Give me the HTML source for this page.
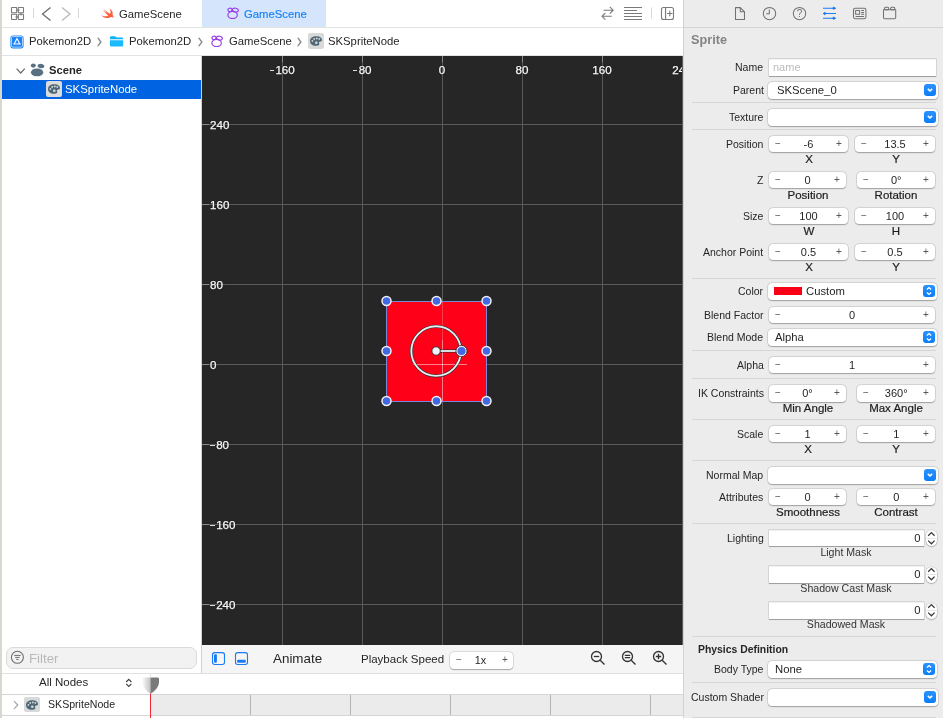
<!DOCTYPE html><html><head><meta charset="utf-8"><style>
*{box-sizing:border-box;margin:0;padding:0}
html,body{width:943px;height:718px;overflow:hidden;background:#fff;font-family:"Liberation Sans",sans-serif;color:#262626}
.a{position:absolute}
.t{position:absolute;white-space:nowrap;line-height:1}
svg{position:absolute;overflow:visible}
.fld{position:absolute;background:#fff;border-radius:4px;box-shadow:0 0 0 0.6px rgba(0,0,0,.14),0 0.8px 1.2px rgba(0,0,0,.28)}
.tf{position:absolute;background:#fff;box-shadow:inset 0 0.5px 0 rgba(0,0,0,.1),0 0 0 0.6px rgba(0,0,0,.16),0 1px 0.6px rgba(0,0,0,.25)}
.lbl{position:absolute;white-space:nowrap;line-height:1;font-size:10.5px;color:#262626;text-align:right}
.sub{position:absolute;white-space:nowrap;line-height:1;font-size:11.5px;color:#1d1d1d;text-align:center;-webkit-text-stroke:0.2px #1d1d1d}
.val{position:absolute;white-space:nowrap;line-height:1;font-size:11px;color:#262626;text-align:center}
.pm{position:absolute;white-space:nowrap;line-height:1;font-size:10px;color:#555}
.sep{position:absolute;left:692px;width:244px;height:1px;background:#d6d6d6}
.t,.lbl,.sub,.val,.pm,svg{will-change:transform}
.blue{position:absolute;width:12px;height:12px;border-radius:3px;background:linear-gradient(#2a92ff,#0a7df7)}
</style></head><body>
<div class="a" style="left:0;top:0;width:2px;height:718px;background:#d9d7d0"></div>
<div class="a" style="left:2px;top:0;width:681px;height:27px;background:#fff"></div>
<div class="a" style="left:2px;top:27px;width:681px;height:1px;background:#e3e3e3"></div>
<div class="a" style="left:202px;top:0;width:124px;height:27px;background:#d5e6fc"></div>
<div class="a" style="left:2px;top:55px;width:681px;height:1px;background:#e3e3e3"></div>
<div class="a" style="left:202px;top:56px;width:480px;height:589px;background:#262626;overflow:hidden" id="cv"></div>
<div class="a" style="left:201px;top:56px;width:1px;height:617px;background:#d0d0d0"></div>
<div class="a" style="left:683px;top:0;width:260px;height:718px;background:#ececec"></div>
<div class="a" style="left:683px;top:0;width:1px;height:718px;background:#d2d2d2"></div>
<div class="a" style="left:682px;top:56px;width:1px;height:589px;background:#5c5c5c"></div>
<div class="a" style="left:684px;top:27px;width:259px;height:1px;background:#d4d4d4"></div>
<svg style="left:0;top:0" width="943" height="28" viewBox="0 0 943 28">
<g fill="none" stroke="#7a7a7a" stroke-width="1.1">
<rect x="11.5" y="7.5" width="5.2" height="5.2" rx="0.4"/><rect x="18.3" y="7.5" width="5.2" height="5.2" rx="0.4"/>
<rect x="11.5" y="14.3" width="5.2" height="5.2" rx="0.4"/><rect x="18.3" y="14.3" width="5.2" height="5.2" rx="0.4"/>
<path d="M16.7 10.1 H19.5 M21 12.7 V15.5 M18.3 16.9 H15.5"/>
</g>
<rect x="33" y="8" width="1" height="10" fill="#d8d8d8"/>
<path d="M50.5 7.5 L42.5 14 L50.5 20.5" fill="none" stroke="#6c6c6c" stroke-width="1.3"/>
<path d="M62 7.5 L70 14 L62 20.5" fill="none" stroke="#b8b8b8" stroke-width="1.3"/>
<rect x="78" y="8" width="1" height="10" fill="#d8d8d8"/>
<g fill="none" stroke="#7a7a7a" stroke-width="1.1">
<path d="M603.5 10.2 H613.2 M609.8 6.8 L613.2 10.2 L609.8 13.6"/>
<path d="M611.8 16.3 H602 M605.4 12.9 L602 16.3 L605.4 19.7"/>
</g>
<g fill="#7a7a7a">
<rect x="624" y="7" width="18" height="1"/><rect x="624" y="10" width="13" height="1"/><rect x="624" y="13" width="18" height="1"/>
<rect x="624" y="16" width="18" height="1"/><rect x="624" y="19" width="18" height="1"/>
</g>
<rect x="651" y="7.5" width="1" height="11" fill="#d8d8d8"/>
<g fill="none" stroke="#7a7a7a" stroke-width="1.1">
<rect x="661.5" y="7.5" width="12" height="12" rx="2"/><path d="M665.6 7.5 V19.5 M669.8 10.8 V16.2 M667.1 13.5 H672.5"/>
</g>
</svg>
<svg style="left:100.4px;top:8.3px" width="15" height="11" viewBox="0 0 15 11">
<path d="M9.5 0.3 C12 2 13.2 4.3 12.6 6.8 C13.5 8 13.7 9.2 13.4 10 C12.9 9.2 11.9 8.9 11.1 9.1 C8.6 10.6 4.5 10.6 1 7.2 C3.5 8.6 6.3 8.7 8.2 7.4 C5.9 5.8 3.8 3.4 2.6 1.8 C4.2 3.3 6.3 4.8 7.5 5.6 C5.6 3.8 4.5 2.3 3.7 1 C6 3.2 8.4 4.9 10.1 6 C10.9 4.3 10.7 2.3 9.5 0.3 Z" fill="#fc5f3e"/>
</svg>
<div class="t" style="left:119px;top:8.8px;font-size:11.3px;color:#262626">GameScene</div>
<svg style="left:226.5px;top:7.4px" width="13" height="13" viewBox="0 0 13 13">
<g fill="none" stroke="#9b3fe6" stroke-width="1.15">
<ellipse cx="5.6" cy="7.9" rx="4.7" ry="3.6"/>
<ellipse cx="3" cy="2.9" rx="2.1" ry="1.7" transform="rotate(-15 3 2.9)"/>
<ellipse cx="8.4" cy="3.1" rx="3" ry="1.9" transform="rotate(12 8.4 3.1)"/>
</g></svg>
<div class="t" style="left:243.5px;top:8.8px;font-size:11.3px;color:#1a84f6;-webkit-text-stroke:0.2px #1a84f6">GameScene</div>
<svg style="left:10px;top:34.6px" width="14" height="14" viewBox="0 0 14 14">
<rect x="0.4" y="0.4" width="13.2" height="13" rx="2.6" fill="#1b83f7"/>
<rect x="1.5" y="1.5" width="11" height="10.6" rx="1.3" fill="none" stroke="#d6e8ff" stroke-width="0.75"/>
<g stroke="#fff" stroke-width="1.1" fill="none" stroke-linecap="round"><path d="M7 3.4 L4.3 8.8 M7 3.4 L9.7 8.8 M3.6 9 H10.4"/></g>
</svg>
<div class="t" style="left:29.3px;top:36.2px;font-size:11.3px">Pokemon2D</div>
<svg style="left:97.3px;top:36.5px" width="5" height="10" viewBox="0 0 5 10"><path d="M1 1.2 L3.9 5 L1 8.8" fill="none" stroke="#8c8c8c" stroke-width="1.4" stroke-linecap="round" stroke-linejoin="round"/></svg>
<svg style="left:110px;top:35.6px" width="14" height="11" viewBox="0 0 14 11">
<path d="M0 1.4 Q0 0.2 1.2 0.2 H4.6 Q5.4 0.2 6 0.9 L6.6 1.5 H12 Q13.2 1.5 13.2 2.7 V3.3 H0 Z" fill="#0ab2fa"/>
<path d="M0 4.3 H13.2 V9.2 Q13.2 10.4 12 10.4 H1.2 Q0 10.4 0 9.2 Z" fill="#1bbafc"/>
</svg>
<div class="t" style="left:129.4px;top:36.2px;font-size:11.3px">Pokemon2D</div>
<svg style="left:197.5px;top:36.5px" width="5" height="10" viewBox="0 0 5 10"><path d="M1 1.2 L3.9 5 L1 8.8" fill="none" stroke="#8c8c8c" stroke-width="1.4" stroke-linecap="round" stroke-linejoin="round"/></svg>
<svg style="left:211.4px;top:35.4px" width="13" height="13" viewBox="0 0 13 13">
<g fill="none" stroke="#9b3fe6" stroke-width="1.15">
<ellipse cx="5.6" cy="7.9" rx="4.7" ry="3.6"/>
<ellipse cx="3" cy="2.9" rx="2.1" ry="1.7" transform="rotate(-15 3 2.9)"/>
<ellipse cx="8.4" cy="3.1" rx="3" ry="1.9" transform="rotate(12 8.4 3.1)"/>
</g></svg>
<div class="t" style="left:229px;top:36.2px;font-size:11.3px">GameScene</div>
<svg style="left:296.5px;top:36.5px" width="5" height="10" viewBox="0 0 5 10"><path d="M1 1.2 L3.9 5 L1 8.8" fill="none" stroke="#8c8c8c" stroke-width="1.4" stroke-linecap="round" stroke-linejoin="round"/></svg>
<div class="a" style="left:308.2px;top:33.2px;width:15.5px;height:15.5px;background:#d9d9d9;border-radius:2px"></div>
<svg style="left:310.0px;top:36.0px" width="12" height="10" viewBox="0 0 12 10">
<path d="M6.2 0.2 C9.6 0.2 12 1.8 12 4 C12 5.5 10.8 5.6 9.8 5.7 C8.9 5.8 8.7 6.6 9.2 7.4 C9.6 8.3 9 9.6 6.4 9.8 C2.6 10 0 8.2 0 5 C0 2.2 2.6 0.2 6.2 0.2 Z" fill="#4f6878"/>
<g fill="#d9d9d9"><circle cx="4.2" cy="2.9" r="0.95"/><circle cx="6.8" cy="2.4" r="0.95"/><circle cx="9.3" cy="2.9" r="0.9"/><circle cx="2.4" cy="4.9" r="0.9"/><circle cx="6.3" cy="6.8" r="1.3"/></g>
</svg>
<div class="t" style="left:328px;top:36.2px;font-size:11.3px">SKSpriteNode</div>
<svg style="left:16px;top:68px" width="10" height="6" viewBox="0 0 10 6"><path d="M0.6 0.6 L4.7 5 L8.8 0.6" fill="none" stroke="#6a6a6a" stroke-width="1.2"/></svg>
<svg style="left:0;top:0" width="60" height="80" viewBox="0 0 60 80">
<ellipse cx="33.3" cy="65.6" rx="2.5" ry="2.1" fill="#587082"/>
<ellipse cx="41" cy="66.1" rx="3.4" ry="2.2" fill="#587082" transform="rotate(8 41 66.1)"/>
<ellipse cx="37.1" cy="72.4" rx="6.6" ry="4.4" fill="#587082" stroke="#fff" stroke-width="0.9"/>
</svg>
<div class="t" style="left:49.3px;top:64.8px;font-size:11.2px;font-weight:bold;color:#262626">Scene</div>
<div class="a" style="left:2px;top:80px;width:199px;height:19px;background:#0063e1"></div>
<div class="a" style="left:46.3px;top:81.2px;width:15.5px;height:15.5px;background:#dcdcdc;border-radius:2px"></div>
<svg style="left:48.099999999999994px;top:84.0px" width="12" height="10" viewBox="0 0 12 10">
<path d="M6.2 0.2 C9.6 0.2 12 1.8 12 4 C12 5.5 10.8 5.6 9.8 5.7 C8.9 5.8 8.7 6.6 9.2 7.4 C9.6 8.3 9 9.6 6.4 9.8 C2.6 10 0 8.2 0 5 C0 2.2 2.6 0.2 6.2 0.2 Z" fill="#4f6878"/>
<g fill="#dcdcdc"><circle cx="4.2" cy="2.9" r="0.95"/><circle cx="6.8" cy="2.4" r="0.95"/><circle cx="9.3" cy="2.9" r="0.9"/><circle cx="2.4" cy="4.9" r="0.9"/><circle cx="6.3" cy="6.8" r="1.3"/></g>
</svg>
<div class="t" style="left:65px;top:84px;font-size:11.4px;color:#fff">SKSpriteNode</div>
<div class="a" style="left:282px;top:56px;width:1px;height:589px;background:#5a5a5a"></div>
<div class="a" style="left:362px;top:56px;width:1px;height:589px;background:#5a5a5a"></div>
<div class="a" style="left:442px;top:56px;width:1px;height:589px;background:#5a5a5a"></div>
<div class="a" style="left:522px;top:56px;width:1px;height:589px;background:#5a5a5a"></div>
<div class="a" style="left:602px;top:56px;width:1px;height:589px;background:#5a5a5a"></div>
<div class="a" style="left:202px;top:124px;width:480px;height:1px;background:#5a5a5a"></div>
<div class="a" style="left:202px;top:204px;width:480px;height:1px;background:#5a5a5a"></div>
<div class="a" style="left:202px;top:284px;width:480px;height:1px;background:#5a5a5a"></div>
<div class="a" style="left:202px;top:364px;width:480px;height:1px;background:#5a5a5a"></div>
<div class="a" style="left:202px;top:444px;width:480px;height:1px;background:#5a5a5a"></div>
<div class="a" style="left:202px;top:524px;width:480px;height:1px;background:#5a5a5a"></div>
<div class="a" style="left:202px;top:604px;width:480px;height:1px;background:#5a5a5a"></div>
<div class="a" style="left:386px;top:301px;width:101px;height:101px;background:#ff0019;border:1px solid #7d87d8"></div>
<div class="a" style="left:442px;top:302px;width:1px;height:38px;background:rgba(255,255,255,.22)"></div>
<div class="a" style="left:442px;top:340px;width:1px;height:61px;background:rgba(255,255,255,.5)"></div>
<div class="a" style="left:413px;top:364px;width:54px;height:1px;background:rgba(255,255,255,.5)"></div>
<div class="a" style="left:202px;top:56px;width:480px;height:589px;overflow:hidden"><div class="a" style="left:80px;top:0px;width:1px;height:6px;background:#8a8a8a"></div><div class="t" style="left:40px;width:80px;text-align:center;top:8.2px;font-size:11.6px;color:#f8f8f8;-webkit-text-stroke:0.25px #f8f8f8;text-shadow:0 0 1.5px #111"><span style="display:inline-block;width:4.4px;height:1.1px;background:#dcdcdc;vertical-align:2.6px;margin-right:1.4px;margin-left:0.4px"></span>160</div><div class="a" style="left:160px;top:0px;width:1px;height:6px;background:#8a8a8a"></div><div class="t" style="left:120px;width:80px;text-align:center;top:8.2px;font-size:11.6px;color:#f8f8f8;-webkit-text-stroke:0.25px #f8f8f8;text-shadow:0 0 1.5px #111"><span style="display:inline-block;width:4.4px;height:1.1px;background:#dcdcdc;vertical-align:2.6px;margin-right:1.4px;margin-left:0.4px"></span>80</div><div class="a" style="left:240px;top:0px;width:1px;height:6px;background:#8a8a8a"></div><div class="t" style="left:200px;width:80px;text-align:center;top:8.2px;font-size:11.6px;color:#f8f8f8;-webkit-text-stroke:0.25px #f8f8f8;text-shadow:0 0 1.5px #111">0</div><div class="a" style="left:320px;top:0px;width:1px;height:6px;background:#8a8a8a"></div><div class="t" style="left:280px;width:80px;text-align:center;top:8.2px;font-size:11.6px;color:#f8f8f8;-webkit-text-stroke:0.25px #f8f8f8;text-shadow:0 0 1.5px #111">80</div><div class="a" style="left:400px;top:0px;width:1px;height:6px;background:#8a8a8a"></div><div class="t" style="left:360px;width:80px;text-align:center;top:8.2px;font-size:11.6px;color:#f8f8f8;-webkit-text-stroke:0.25px #f8f8f8;text-shadow:0 0 1.5px #111">160</div><div class="a" style="left:480px;top:0px;width:1px;height:6px;background:#8a8a8a"></div><div class="t" style="left:440px;width:80px;text-align:center;top:8.2px;font-size:11.6px;color:#f8f8f8;-webkit-text-stroke:0.25px #f8f8f8;text-shadow:0 0 1.5px #111">240</div><div class="a" style="left:0px;top:68px;width:7px;height:1px;background:#8a8a8a"></div><div class="t" style="left:8px;top:63.2px;font-size:11.6px;color:#f8f8f8;-webkit-text-stroke:0.25px #f8f8f8;text-shadow:0 0 1.5px #111">240</div><div class="a" style="left:0px;top:148px;width:7px;height:1px;background:#8a8a8a"></div><div class="t" style="left:8px;top:143.2px;font-size:11.6px;color:#f8f8f8;-webkit-text-stroke:0.25px #f8f8f8;text-shadow:0 0 1.5px #111">160</div><div class="a" style="left:0px;top:228px;width:7px;height:1px;background:#8a8a8a"></div><div class="t" style="left:8px;top:223.2px;font-size:11.6px;color:#f8f8f8;-webkit-text-stroke:0.25px #f8f8f8;text-shadow:0 0 1.5px #111">80</div><div class="a" style="left:0px;top:308px;width:7px;height:1px;background:#8a8a8a"></div><div class="t" style="left:8px;top:303.2px;font-size:11.6px;color:#f8f8f8;-webkit-text-stroke:0.25px #f8f8f8;text-shadow:0 0 1.5px #111">0</div><div class="a" style="left:0px;top:388px;width:7px;height:1px;background:#8a8a8a"></div><div class="t" style="left:8px;top:383.2px;font-size:11.6px;color:#f8f8f8;-webkit-text-stroke:0.25px #f8f8f8;text-shadow:0 0 1.5px #111"><span style="display:inline-block;width:4.4px;height:1.1px;background:#dcdcdc;vertical-align:2.6px;margin-right:1.4px;margin-left:0.4px"></span>80</div><div class="a" style="left:0px;top:468px;width:7px;height:1px;background:#8a8a8a"></div><div class="t" style="left:8px;top:463.2px;font-size:11.6px;color:#f8f8f8;-webkit-text-stroke:0.25px #f8f8f8;text-shadow:0 0 1.5px #111"><span style="display:inline-block;width:4.4px;height:1.1px;background:#dcdcdc;vertical-align:2.6px;margin-right:1.4px;margin-left:0.4px"></span>160</div><div class="a" style="left:0px;top:548px;width:7px;height:1px;background:#8a8a8a"></div><div class="t" style="left:8px;top:543.2px;font-size:11.6px;color:#f8f8f8;-webkit-text-stroke:0.25px #f8f8f8;text-shadow:0 0 1.5px #111"><span style="display:inline-block;width:4.4px;height:1.1px;background:#dcdcdc;vertical-align:2.6px;margin-right:1.4px;margin-left:0.4px"></span>240</div></div>
<svg style="left:0;top:0" width="943" height="718" viewBox="0 0 943 718">
<circle cx="436.1" cy="351.1" r="24.8" fill="none" stroke="#2a2a2a" stroke-width="3"/>
<circle cx="436.1" cy="351.1" r="24.8" fill="none" stroke="#e6ecef" stroke-width="1.9"/>
<line x1="436" y1="351" x2="458" y2="351" stroke="#2a2a2a" stroke-width="3"/>
<line x1="436" y1="351" x2="458" y2="351" stroke="#dfe7ea" stroke-width="1.9"/>
<circle cx="436.1" cy="351" r="4.2" fill="#f0f2fc" stroke="#2a2a2a" stroke-width="0.9"/>
<circle cx="461.5" cy="351" r="4.8" fill="#4468e4" stroke="#eef2f4" stroke-width="1.4"/>
<circle cx="461.5" cy="351" r="5.6" fill="none" stroke="#2a2a2a" stroke-width="0.8"/>
<g fill="#4468e4" stroke="#f4f4f4" stroke-width="1.5">
<circle cx="386.5" cy="301" r="4.5"/><circle cx="436.5" cy="301" r="4.5"/><circle cx="486.5" cy="301" r="4.5"/>
<circle cx="386.5" cy="351" r="4.5"/><circle cx="486.5" cy="351" r="4.5"/>
<circle cx="386.5" cy="401" r="4.5"/><circle cx="436.5" cy="401" r="4.5"/><circle cx="486.5" cy="401" r="4.5"/>
</g>
</svg>
<div class="a" style="left:202px;top:645px;width:481px;height:28px;background:#f5f5f5"></div>
<div class="a" style="left:2px;top:645px;width:199px;height:28px;background:#fff"></div>
<div class="a" style="left:2px;top:673px;width:681px;height:1px;background:#e0e0e0"></div>
<svg style="left:0;top:0" width="943" height="718" viewBox="0 0 943 718">
<g fill="none" stroke="#1a7cf5" stroke-width="1.1">
<rect x="212.5" y="652.6" width="12" height="11.9" rx="2.2"/><rect x="235.5" y="652.6" width="12" height="11.9" rx="2.2"/>
</g>
<rect x="214" y="654.3" width="2.9" height="8.4" rx="1" fill="#1a7cf5"/>
<rect x="237.1" y="659.8" width="8.7" height="2.9" rx="1" fill="#1a7cf5"/>
<g fill="none" stroke="#333" stroke-width="1.3">
<circle cx="596.5" cy="656.5" r="5"/><path d="M600.2 660.2 L604.5 664.5"/><path d="M593.8 656.5 H599.2"/>
<circle cx="627.5" cy="656.5" r="5"/><path d="M631.2 660.2 L635.5 664.5"/><path d="M624.8 655.3 H630.2 M624.8 657.7 H630.2"/>
<circle cx="658.5" cy="656.5" r="5"/><path d="M662.2 660.2 L666.5 664.5"/><path d="M655.8 656.5 H661.2 M658.5 653.8 V659.2"/>
</g>
</svg>
<div class="t" style="left:272.5px;top:652px;font-size:13.4px;color:#262626">Animate</div>
<div class="t" style="left:360.5px;top:653.5px;font-size:11.5px;color:#262626">Playback Speed</div>
<div class="fld" style="left:450px;top:652px;width:63px;height:16.5px"></div>
<div class="pm" style="left:456px;top:655px">−</div>
<div class="val" style="left:470px;width:21px;top:654.6px;font-size:10.8px">1x</div>
<div class="pm" style="left:501.5px;top:655px">+</div>
<div class="a" style="left:6px;top:647px;width:190.5px;height:21.5px;background:#f2f2f2;border:1px solid #dadada;border-radius:7px"></div>
<svg style="left:0;top:640px" width="40" height="30" viewBox="0 640 40 30"><circle cx="17.4" cy="657.3" r="6" fill="none" stroke="#6e6e6e" stroke-width="1.05"/>
<path d="M14.2 655.4 H20.6 M15.2 657.4 H19.6 M16.2 659.4 H18.6" stroke="#6e6e6e" stroke-width="1"/></svg>
<div class="t" style="left:28.5px;top:651.5px;font-size:13.3px;color:#b9b9b9">Filter</div>
<div class="a" style="left:2px;top:674px;width:681px;height:44px;background:#fff"></div>
<div class="t" style="left:39px;top:677.3px;font-size:11.5px;color:#262626">All Nodes</div>
<svg style="left:125px;top:678px" width="8" height="10" viewBox="0 0 8 10"><path d="M1.2 4 L3.8 1.3 L6.4 4 M1.2 5.8 L3.8 8.5 L6.4 5.8" fill="none" stroke="#444" stroke-width="1.2"/></svg>
<div class="a" style="left:2px;top:694px;width:681px;height:1px;background:#d6d6d6"></div>
<div class="a" style="left:151px;top:695px;width:532px;height:20px;background:#ebebeb"></div>
<div class="a" style="left:2px;top:715px;width:681px;height:1px;background:#d6d6d6"></div>
<div class="a" style="left:250px;top:695px;width:1px;height:20px;background:#b4b4b4"></div>
<div class="a" style="left:350px;top:695px;width:1px;height:20px;background:#b4b4b4"></div>
<div class="a" style="left:450px;top:695px;width:1px;height:20px;background:#b4b4b4"></div>
<div class="a" style="left:550px;top:695px;width:1px;height:20px;background:#b4b4b4"></div>
<div class="a" style="left:650px;top:695px;width:1px;height:20px;background:#b4b4b4"></div>
<div class="a" style="left:150px;top:692px;width:1px;height:26px;background:#ee2a3a"></div>
<svg style="left:142px;top:676.6px" width="18" height="18" viewBox="0 0 18 18">
<defs><linearGradient id="pg" x1="0" x2="1"><stop offset="0" stop-color="#fafafa"/><stop offset="0.48" stop-color="#c4c4c4"/><stop offset="0.5" stop-color="#7a7a7a"/><stop offset="1" stop-color="#7a7a7a"/></linearGradient></defs>
<path d="M0.4 0.6 H15.6 Q17 0.6 17 2 V5 C17 10 12.5 14.5 8.6 16.8 C4.6 14.5 0.4 10 0.4 5 Z" fill="url(#pg)"/>
</svg>
<div class="a" style="left:149.5px;top:673px;width:1px;height:4px;background:#e4e4e4"></div>
<svg style="left:13px;top:700px" width="6" height="10" viewBox="0 0 6 10"><path d="M1 1.2 L4.8 5 L1 8.8" fill="none" stroke="#a0a0a0" stroke-width="1.1"/></svg>
<div class="a" style="left:24px;top:696.9px;width:15.5px;height:15.5px;background:#d9d9d9;border-radius:2px"></div>
<svg style="left:25.8px;top:699.6999999999999px" width="12" height="10" viewBox="0 0 12 10">
<path d="M6.2 0.2 C9.6 0.2 12 1.8 12 4 C12 5.5 10.8 5.6 9.8 5.7 C8.9 5.8 8.7 6.6 9.2 7.4 C9.6 8.3 9 9.6 6.4 9.8 C2.6 10 0 8.2 0 5 C0 2.2 2.6 0.2 6.2 0.2 Z" fill="#4f6878"/>
<g fill="#d9d9d9"><circle cx="4.2" cy="2.9" r="0.95"/><circle cx="6.8" cy="2.4" r="0.95"/><circle cx="9.3" cy="2.9" r="0.9"/><circle cx="2.4" cy="4.9" r="0.9"/><circle cx="6.3" cy="6.8" r="1.3"/></g>
</svg>
<div class="t" style="left:48px;top:699px;font-size:10.6px;color:#262626">SKSpriteNode</div>
<svg style="left:0;top:0" width="943" height="28" viewBox="0 0 943 28">
<g fill="none" stroke="#727272" stroke-width="1.05" stroke-linejoin="round">
<path d="M735.5 7.6 H740.3 L744.5 11.8 V19.4 H735.5 Z"/>
<path d="M740.3 7.6 V11.8 H744.5"/>
<circle cx="769.5" cy="13.6" r="6.2"/><path d="M769.3 9.6 V13.8 H766.2"/>
<circle cx="799.5" cy="13.6" r="6.2"/>
<rect x="853.5" y="8.3" width="12.4" height="10.4" rx="1.6"/>
<rect x="855.6" y="10.5" width="4" height="3.8"/>
<path d="M861.2 10.5 H864 M861.2 12.4 H864 M861.2 14.3 H864 M855.6 16.5 H864"/>
<path d="M883.5 9.8 H895.7 V17.5 Q895.7 18.7 894.5 18.7 H884.7 Q883.5 18.7 883.5 17.5 Z"/>
<rect x="884.5" y="7.2" width="4.2" height="2.6" rx="1"/><rect x="890.6" y="7.2" width="4.2" height="2.6" rx="1"/>
</g>
<text x="799.6" y="17.4" font-size="10" text-anchor="middle" fill="#727272" font-family="Liberation Sans">?</text>
<g stroke="#1a7cf5" stroke-width="1.1"><path d="M823 8.3 H836 M823 13.5 H836 M823 18.3 H836"/></g>
<g fill="#1a7cf5"><path d="M833.8 6.6 L835.5 8.3 L833.8 10 L832.1 8.3 Z"/><path d="M824.8 11.8 L826.5 13.5 L824.8 15.2 L823.1 13.5 Z"/><path d="M833.8 16.6 L835.5 18.3 L833.8 20 L832.1 18.3 Z"/></g>
</svg>
<div class="t" style="left:691.3px;top:34.4px;font-size:12.7px;font-weight:bold;color:#848484">Sprite</div>
<div class="lbl" style="right:179.5px;top:62.0px">Name</div>
<div class="tf" style="left:769px;top:59px;width:167px;height:16.5px"></div>
<div class="val" style="left:773px;top:62px;text-align:left;font-size:11px;color:#bcbcbc">name</div>
<div class="lbl" style="right:179.5px;top:85.0px">Parent</div>
<div class="fld" style="left:768px;top:82px;width:170px;height:16.5px"></div>
<div class="blue" style="left:924px;top:84.3px"></div>
<svg style="left:924px;top:84.3px" width="12" height="12" viewBox="0 0 12 12"><path d="M3.8 4.9 L6 6.9 L8.2 4.9" fill="none" stroke="#fff" stroke-width="1.45"/></svg>
<div class="val" style="left:777px;top:85.3px;text-align:left;font-size:11.3px">SKScene_0</div>
<div class="sep" style="top:102px"></div>
<div class="lbl" style="right:179.5px;top:112.0px">Texture</div>
<div class="fld" style="left:768px;top:109px;width:170px;height:16.5px"></div>
<div class="blue" style="left:924px;top:111.3px"></div>
<svg style="left:924px;top:111.3px" width="12" height="12" viewBox="0 0 12 12"><path d="M3.8 4.9 L6 6.9 L8.2 4.9" fill="none" stroke="#fff" stroke-width="1.45"/></svg>
<div class="sep" style="top:129px"></div>
<div class="lbl" style="right:179.5px;top:139.10000000000002px">Position</div>
<div class="fld" style="left:769px;top:135.8px;width:79px;height:16.5px"></div>
<div class="pm" style="left:775.3px;top:138.8px">−</div>
<div class="val" style="left:769px;width:79px;top:139.10000000000002px">-6</div>
<div class="pm" style="left:836.4px;top:138.8px">+</div>
<div class="fld" style="left:855px;top:135.8px;width:80px;height:16.5px"></div>
<div class="pm" style="left:861.3px;top:138.8px">−</div>
<div class="val" style="left:855px;width:80px;top:139.10000000000002px">13.5</div>
<div class="pm" style="left:923.4px;top:138.8px">+</div>
<div class="sub" style="left:758.5px;width:100px;top:153.9px">X</div>
<div class="sub" style="left:845.8px;width:100px;top:153.9px">Y</div>
<div class="lbl" style="right:179.5px;top:175.0px">Z</div>
<div class="fld" style="left:769px;top:171.7px;width:77px;height:16.5px"></div>
<div class="pm" style="left:775.3px;top:174.7px">−</div>
<div class="val" style="left:769px;width:77px;top:175.0px">0</div>
<div class="pm" style="left:834.4px;top:174.7px">+</div>
<div class="fld" style="left:856.5px;top:171.7px;width:78.5px;height:16.5px"></div>
<div class="pm" style="left:862.8px;top:174.7px">−</div>
<div class="val" style="left:856.5px;width:78.5px;top:175.0px">0°</div>
<div class="pm" style="left:923.4px;top:174.7px">+</div>
<div class="sub" style="left:757.5px;width:100px;top:189.79999999999998px">Position</div>
<div class="sub" style="left:845.8px;width:100px;top:189.79999999999998px">Rotation</div>
<div class="lbl" style="right:179.5px;top:211.10000000000002px">Size</div>
<div class="fld" style="left:769px;top:207.8px;width:79px;height:16.5px"></div>
<div class="pm" style="left:775.3px;top:210.8px">−</div>
<div class="val" style="left:769px;width:79px;top:211.10000000000002px">100</div>
<div class="pm" style="left:836.4px;top:210.8px">+</div>
<div class="fld" style="left:855px;top:207.8px;width:80px;height:16.5px"></div>
<div class="pm" style="left:861.3px;top:210.8px">−</div>
<div class="val" style="left:855px;width:80px;top:211.10000000000002px">100</div>
<div class="pm" style="left:923.4px;top:210.8px">+</div>
<div class="sub" style="left:758.5px;width:100px;top:225.9px">W</div>
<div class="sub" style="left:845.8px;width:100px;top:225.9px">H</div>
<div class="lbl" style="right:179.5px;top:247.0px">Anchor Point</div>
<div class="fld" style="left:769px;top:243.7px;width:79px;height:16.5px"></div>
<div class="pm" style="left:775.3px;top:246.7px">−</div>
<div class="val" style="left:769px;width:79px;top:247.0px">0.5</div>
<div class="pm" style="left:836.4px;top:246.7px">+</div>
<div class="fld" style="left:855px;top:243.7px;width:80px;height:16.5px"></div>
<div class="pm" style="left:861.3px;top:246.7px">−</div>
<div class="val" style="left:855px;width:80px;top:247.0px">0.5</div>
<div class="pm" style="left:923.4px;top:246.7px">+</div>
<div class="sub" style="left:758.5px;width:100px;top:261.8px">X</div>
<div class="sub" style="left:845.8px;width:100px;top:261.8px">Y</div>
<div class="sep" style="top:278px"></div>
<div class="lbl" style="right:179.5px;top:286.0px">Color</div>
<div class="fld" style="left:768px;top:283px;width:169px;height:16.5px"></div>
<div class="blue" style="left:922.9px;top:285.3px"></div>
<svg style="left:922.9px;top:285.3px" width="12" height="12" viewBox="0 0 12 12"><path d="M3.9 4.5 L6 2.6 L8.1 4.5 M3.9 7.5 L6 9.4 L8.1 7.5" fill="none" stroke="#fff" stroke-width="1.35"/></svg>
<div class="a" style="left:774px;top:287.4px;width:28px;height:7.6px;background:#fa0017"></div>
<div class="val" style="left:806px;top:286.3px;text-align:left;font-size:11.3px">Custom</div>
<div class="lbl" style="right:179.5px;top:309.5px">Blend Factor</div>
<div class="fld" style="left:769px;top:306.8px;width:166px;height:16.5px"></div>
<div class="pm" style="left:775.3px;top:309.8px">−</div>
<div class="val" style="left:769px;width:166px;top:310.1px">0</div>
<div class="pm" style="left:923.4px;top:309.8px">+</div>
<div class="lbl" style="right:179.5px;top:331.5px">Blend Mode</div>
<div class="fld" style="left:768px;top:329px;width:169px;height:16.5px"></div>
<div class="blue" style="left:922.9px;top:331.3px"></div>
<svg style="left:922.9px;top:331.3px" width="12" height="12" viewBox="0 0 12 12"><path d="M3.9 4.5 L6 2.6 L8.1 4.5 M3.9 7.5 L6 9.4 L8.1 7.5" fill="none" stroke="#fff" stroke-width="1.35"/></svg>
<div class="val" style="left:775px;top:332.3px;text-align:left;font-size:11.3px">Alpha</div>
<div class="sep" style="top:350px"></div>
<div class="lbl" style="right:179.5px;top:359.5px">Alpha</div>
<div class="fld" style="left:769px;top:356.9px;width:166px;height:16.5px"></div>
<div class="pm" style="left:775.3px;top:359.9px">−</div>
<div class="val" style="left:769px;width:166px;top:360.2px">1</div>
<div class="pm" style="left:923.4px;top:359.9px">+</div>
<div class="sep" style="top:378px"></div>
<div class="lbl" style="right:179.5px;top:387.5px">IK Constraints</div>
<div class="fld" style="left:769px;top:385px;width:77px;height:16.5px"></div>
<div class="pm" style="left:775.3px;top:388px">−</div>
<div class="val" style="left:769px;width:77px;top:388.3px">0°</div>
<div class="pm" style="left:834.4px;top:388px">+</div>
<div class="fld" style="left:856.5px;top:385px;width:78.5px;height:16.5px"></div>
<div class="pm" style="left:862.8px;top:388px">−</div>
<div class="val" style="left:856.5px;width:78.5px;top:388.3px">360°</div>
<div class="pm" style="left:923.4px;top:388px">+</div>
<div class="sub" style="left:757.5px;width:100px;top:403.1px">Min Angle</div>
<div class="sub" style="left:845.8px;width:100px;top:403.1px">Max Angle</div>
<div class="sep" style="top:419px"></div>
<div class="lbl" style="right:179.5px;top:428.5px">Scale</div>
<div class="fld" style="left:769px;top:425.7px;width:77px;height:16.5px"></div>
<div class="pm" style="left:775.3px;top:428.7px">−</div>
<div class="val" style="left:769px;width:77px;top:429.0px">1</div>
<div class="pm" style="left:834.4px;top:428.7px">+</div>
<div class="fld" style="left:856.5px;top:425.7px;width:78.5px;height:16.5px"></div>
<div class="pm" style="left:862.8px;top:428.7px">−</div>
<div class="val" style="left:856.5px;width:78.5px;top:429.0px">1</div>
<div class="pm" style="left:923.4px;top:428.7px">+</div>
<div class="sub" style="left:757.5px;width:100px;top:443.6px">X</div>
<div class="sub" style="left:845.8px;width:100px;top:443.6px">Y</div>
<div class="sep" style="top:460px"></div>
<div class="lbl" style="right:179.5px;top:469.5px">Normal Map</div>
<div class="fld" style="left:768px;top:467px;width:170px;height:16.5px"></div>
<div class="blue" style="left:924px;top:469.3px"></div>
<svg style="left:924px;top:469.3px" width="12" height="12" viewBox="0 0 12 12"><path d="M3.8 4.9 L6 6.9 L8.2 4.9" fill="none" stroke="#fff" stroke-width="1.45"/></svg>
<div class="lbl" style="right:179.5px;top:491.5px">Attributes</div>
<div class="fld" style="left:769px;top:488.8px;width:77px;height:16.5px"></div>
<div class="pm" style="left:775.3px;top:491.8px">−</div>
<div class="val" style="left:769px;width:77px;top:492.1px">0</div>
<div class="pm" style="left:834.4px;top:491.8px">+</div>
<div class="fld" style="left:856.5px;top:488.8px;width:78.5px;height:16.5px"></div>
<div class="pm" style="left:862.8px;top:491.8px">−</div>
<div class="val" style="left:856.5px;width:78.5px;top:492.1px">0</div>
<div class="pm" style="left:923.4px;top:491.8px">+</div>
<div class="sub" style="left:757.5px;width:100px;top:507.1px">Smoothness</div>
<div class="sub" style="left:845.8px;width:100px;top:507.1px">Contrast</div>
<div class="sep" style="top:523px"></div>
<div class="lbl" style="right:179.5px;top:532.5px">Lighting</div>
<div class="tf" style="left:769px;top:529.7px;width:155.3px;height:16.7px"></div>
<div class="val" style="left:880px;width:40.5px;text-align:right;top:533.0px;font-size:11.3px">0</div>
<div class="fld" style="left:926.3px;top:530.2px;width:10.8px;height:16px;border-radius:5.4px"></div>
<div class="a" style="left:926.3px;top:537.7px;width:10.8px;height:0.8px;background:#e6e6e6"></div>
<svg style="left:926.3px;top:529.7px" width="11" height="17" viewBox="0 0 11 17"><path d="M2.2 5.8 L5.4 2.6 L8.6 5.8 M2.2 10.6 L5.4 13.8 L8.6 10.6" fill="none" stroke="#3a3a3a" stroke-width="1.3"/></svg>
<div class="val" style="left:796px;width:100px;top:546.7px;font-size:10.6px;color:#333">Light Mask</div>
<div class="tf" style="left:769px;top:566px;width:155.3px;height:16.7px"></div>
<div class="val" style="left:880px;width:40.5px;text-align:right;top:569.3px;font-size:11.3px">0</div>
<div class="fld" style="left:926.3px;top:566.5px;width:10.8px;height:16px;border-radius:5.4px"></div>
<div class="a" style="left:926.3px;top:574px;width:10.8px;height:0.8px;background:#e6e6e6"></div>
<svg style="left:926.3px;top:566px" width="11" height="17" viewBox="0 0 11 17"><path d="M2.2 5.8 L5.4 2.6 L8.6 5.8 M2.2 10.6 L5.4 13.8 L8.6 10.6" fill="none" stroke="#3a3a3a" stroke-width="1.3"/></svg>
<div class="val" style="left:796px;width:100px;top:583px;font-size:10.6px;color:#333">Shadow Cast Mask</div>
<div class="tf" style="left:769px;top:602px;width:155.3px;height:16.7px"></div>
<div class="val" style="left:880px;width:40.5px;text-align:right;top:605.3px;font-size:11.3px">0</div>
<div class="fld" style="left:926.3px;top:602.5px;width:10.8px;height:16px;border-radius:5.4px"></div>
<div class="a" style="left:926.3px;top:610px;width:10.8px;height:0.8px;background:#e6e6e6"></div>
<svg style="left:926.3px;top:602px" width="11" height="17" viewBox="0 0 11 17"><path d="M2.2 5.8 L5.4 2.6 L8.6 5.8 M2.2 10.6 L5.4 13.8 L8.6 10.6" fill="none" stroke="#3a3a3a" stroke-width="1.3"/></svg>
<div class="val" style="left:796px;width:100px;top:619px;font-size:10.6px;color:#333">Shadowed Mask</div>
<div class="sep" style="top:636px"></div>
<div class="t" style="left:698.3px;top:644.6px;font-size:10.4px;font-weight:bold;color:#262626">Physics Definition</div>
<div class="lbl" style="right:179.5px;top:664.0px">Body Type</div>
<div class="fld" style="left:768px;top:661px;width:169px;height:16.5px"></div>
<div class="blue" style="left:922.9px;top:663.3px"></div>
<svg style="left:922.9px;top:663.3px" width="12" height="12" viewBox="0 0 12 12"><path d="M3.9 4.5 L6 2.6 L8.1 4.5 M3.9 7.5 L6 9.4 L8.1 7.5" fill="none" stroke="#fff" stroke-width="1.35"/></svg>
<div class="val" style="left:775px;top:664.3px;text-align:left;font-size:11.3px">None</div>
<div class="sep" style="top:682px"></div>
<div class="lbl" style="right:179.5px;top:691.5px">Custom Shader</div>
<div class="fld" style="left:768px;top:689px;width:170px;height:16.5px"></div>
<div class="blue" style="left:924px;top:691.3px"></div>
<svg style="left:924px;top:691.3px" width="12" height="12" viewBox="0 0 12 12"><path d="M3.8 4.9 L6 6.9 L8.2 4.9" fill="none" stroke="#fff" stroke-width="1.45"/></svg>
<div class="sep" style="top:717px"></div>
</body></html>
